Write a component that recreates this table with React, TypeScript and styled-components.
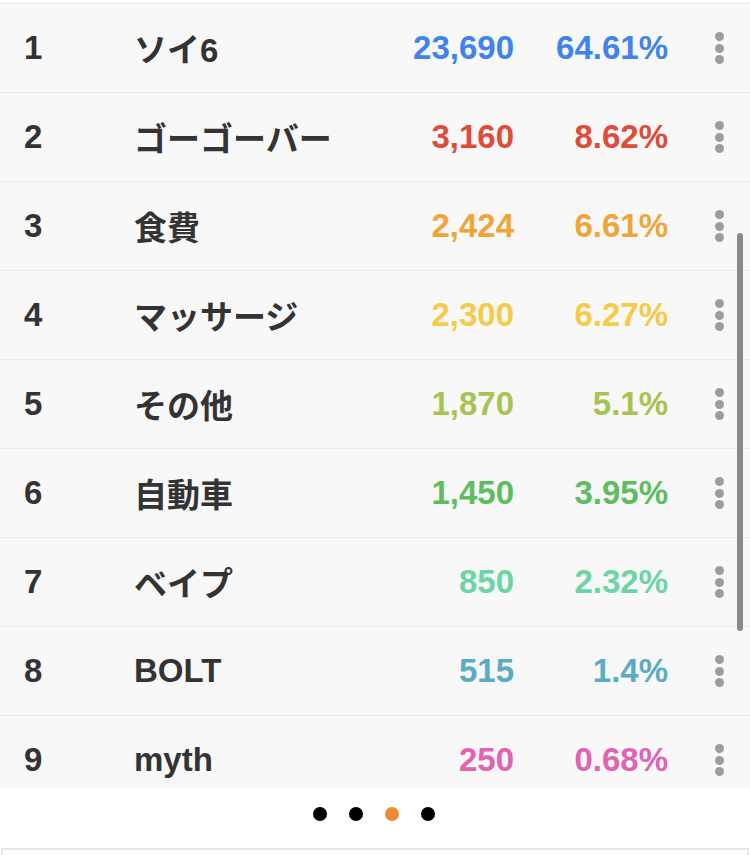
import React from "react";
import styled, { createGlobalStyle } from "styled-components";

const GlobalStyle = createGlobalStyle`
  html, body {
    margin: 0;
    padding: 0;
    background: #fff;
  }
  body {
    font-family: "Liberation Sans", "Noto Sans CJK JP", sans-serif;
  }
`;

const Page = styled.div`
  width: 750px;
  height: 855px;
  overflow: hidden;
  display: flex;
  flex-direction: column;
  background: #fff;
`;

const ListWrap = styled.div`
  position: relative;
  margin-top: 3px;
  height: 784px;
  overflow: hidden;
  border-top: 1px solid #e9e9e9;
  background: #f8f8f8;
`;

const Row = styled.div`
  display: grid;
  grid-template-columns: 110px 1fr 160px 154px 82px;
  align-items: center;
  height: 88px;
  padding-left: 24px;
  border-bottom: 1px solid #ececec;
  font-size: 33px;
  font-weight: 700;
  color: #333;
`;

const Index = styled.span``;

const Name = styled.span`
  white-space: nowrap;
`;

const Amount = styled.span<{ $color: string }>`
  text-align: right;
  color: ${({ $color }) => $color};
`;

const Kebab = styled.div`
  justify-self: end;
  margin-right: 26px;
  display: flex;
  flex-direction: column;
  gap: 2.5px;
`;

const KebabDot = styled.span`
  width: 9px;
  height: 9px;
  border-radius: 50%;
  background: #9d9d9d;
`;

const Scrollbar = styled.div`
  position: absolute;
  right: 7px;
  top: 229px;
  width: 6px;
  height: 398px;
  border-radius: 3px;
  background: #8a8a8a;
`;

const Pager = styled.div`
  height: 60px;
  flex-shrink: 0;
  display: flex;
  justify-content: center;
  align-items: center;
  gap: 22px;
  padding-bottom: 8px;
  padding-right: 2px;
  box-sizing: border-box;
`;

const PageDot = styled.span<{ $active?: boolean }>`
  width: 14px;
  height: 14px;
  border-radius: 50%;
  background: ${({ $active }) => ($active ? "#ee8a33" : "#000")};
`;

const BottomBox = styled.div`
  flex: 1;
  margin: 0 1px;
  border: 2px solid #e6e6e6;
  border-bottom: none;
`;

const rows = [
  { name: "ソイ6", amount: "23,690", pct: "64.61%", color: "#3e83ef" },
  { name: "ゴーゴーバー", amount: "3,160", pct: "8.62%", color: "#e14b3c" },
  { name: "食費", amount: "2,424", pct: "6.61%", color: "#f0a53a" },
  { name: "マッサージ", amount: "2,300", pct: "6.27%", color: "#f6cb48" },
  { name: "その他", amount: "1,870", pct: "5.1%", color: "#a7c453" },
  { name: "自動車", amount: "1,450", pct: "3.95%", color: "#5dbd5f" },
  { name: "ベイプ", amount: "850", pct: "2.32%", color: "#6dd4a6" },
  { name: "BOLT", amount: "515", pct: "1.4%", color: "#5aabc5" },
  { name: "myth", amount: "250", pct: "0.68%", color: "#e063b4" },
];

export default function App() {
  return (
    <Page>
      <GlobalStyle />
      <ListWrap>
        {rows.map((r, i) => (
          <Row key={r.name}>
            <Index>{i + 1}</Index>
            <Name>{r.name}</Name>
            <Amount $color={r.color}>{r.amount}</Amount>
            <Amount $color={r.color}>{r.pct}</Amount>
            <Kebab>
              <KebabDot />
              <KebabDot />
              <KebabDot />
            </Kebab>
          </Row>
        ))}
        <Scrollbar />
      </ListWrap>
      <Pager>
        <PageDot />
        <PageDot />
        <PageDot $active />
        <PageDot />
      </Pager>
      <BottomBox />
    </Page>
  );
}
